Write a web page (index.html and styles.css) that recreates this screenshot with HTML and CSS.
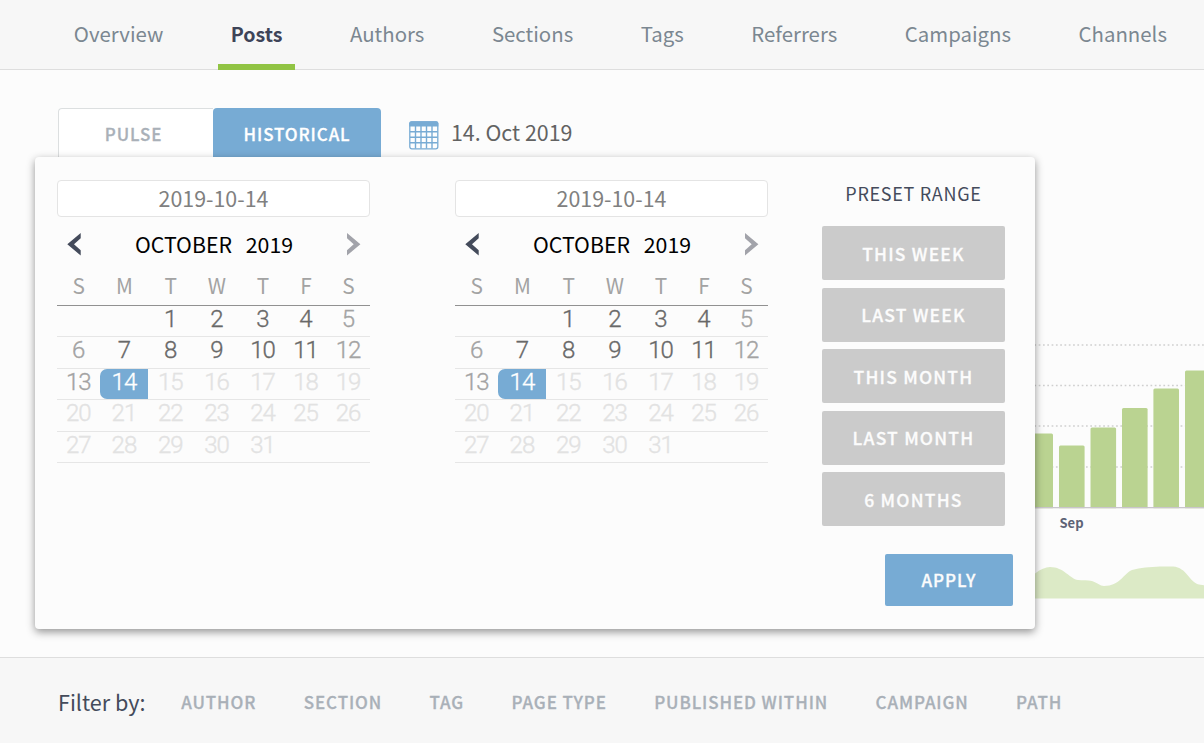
FILE: index.html
```html
<!DOCTYPE html>
<html lang="en">
<head>
<meta charset="utf-8">
<title>Posts</title>
<link rel="stylesheet" href="styles.css">
</head>
<body>
<nav class="tabs">
  <a class="tab">Overview</a>
  <a class="tab active">Posts</a>
  <a class="tab">Authors</a>
  <a class="tab">Sections</a>
  <a class="tab">Tags</a>
  <a class="tab">Referrers</a>
  <a class="tab">Campaigns</a>
  <a class="tab">Channels</a>
</nav>
<main class="content">
  <div class="toolbar">
    <div class="mode pulse">PULSE</div>
    <div class="mode historical">HISTORICAL</div>
    <svg class="cal-icon" width="30" height="29" viewBox="0 0 30 29">
      <rect x="0.8" y="0.8" width="28" height="27" rx="2" fill="#fdfefe" stroke="#77abd4" stroke-width="1.3"/>
      <path d="M.3 5.5V2.300Q.3.300 2.300.3H27.300Q29.300.3 29.300 2.300V5.500Z" fill="#77abd4"/>
      <path d="M6.500 5V27.500M12 5V27.500M17.500 5V27.500M23 5V27.500M1 10.800H28.500M1 16.300H28.500M1 21.800H28.500" stroke="#77abd4" stroke-width="1.400" fill="none"/>
    </svg>
    <span class="date">14. Oct 2019</span>
  </div>
  <svg class="chart" width="204" height="280" viewBox="1000 330 204 280">
    <g stroke="#cfcfcf" stroke-width="1.500" stroke-dasharray="1.700 2.600">
      <path d="M1000 345H1204M1000 385.500H1204M1000 426H1204M1000 467H1204"/>
    </g>
    <g fill="#bad391">
      <rect x="1027" y="433.400" width="26" height="76" rx="1.500"/>
      <rect x="1059" y="445.500" width="25.600" height="64" rx="1.500"/>
      <rect x="1090.500" y="427.500" width="25.600" height="82" rx="1.500"/>
      <rect x="1122" y="408" width="25.600" height="102" rx="1.500"/>
      <rect x="1153.400" y="388.500" width="25.600" height="121" rx="1.500"/>
      <rect x="1185" y="370.500" width="25.600" height="139" rx="1.500"/>
    </g>
    <rect x="1000" y="508.200" width="204" height="4" fill="#fcfcfc"/>
    <rect x="1000" y="507" width="204" height="1.300" fill="#c9c5cb"/>
    <text class="month" x="1059.500" y="528">Sep</text>
    <path fill="#dceac6" d="M1020 598.500V590C1030 576 1041 567 1050 567C1064 567 1070 579 1078 580C1082 580.500 1088 580 1092 581C1097 582.500 1100 586 1104 586C1120 586 1123 574 1132 570C1140 567.500 1150 567 1160 566.500H1173C1187 567.500 1189 582 1199 584.500L1204 585.300V598.500Z"/>
  </svg>
</main>
<footer class="filters">
  <span class="lead">Filter by:</span>
  <span>AUTHOR</span><span>SECTION</span><span>TAG</span><span>PAGE TYPE</span><span>PUBLISHED WITHIN</span><span>CAMPAIGN</span><span>PATH</span>
</footer>

<section class="popover">
  <div class="calendar"></div>
  <div class="calendar"></div>
  <div class="presets">
    <h2>PRESET RANGE</h2>
    <button>THIS WEEK</button>
    <button>LAST WEEK</button>
    <button>THIS MONTH</button>
    <button>LAST MONTH</button>
    <button>6 MONTHS</button>
    <button class="apply">APPLY</button>
  </div>
</section>
<script src="calendar.js"></script>
</body>
</html>
```
FILE: styles.css
```css
* { box-sizing: border-box; }
body {
  margin: 0;
  width: 1204px;
  height: 743px;
  overflow: hidden;
  position: relative;
  display: flex;
  flex-direction: column;
  background: #fcfcfc;
  font-family: "Noto Sans CJK SC", "Noto Sans", sans-serif;
  color: #444b5b;
}
.tabs {
  height: 70px;
  display: flex;
  gap: 41.5px;
  padding-left: 60.800px;
  background: #f7f7f7;
  border-bottom: 1px solid #dedede;
  flex: none;
}
.tab {
  height: 70px;
  padding: 0 13px;
  font-size: 20.400px;
  line-height: 67px;
  color: #7b8791;
  white-space: nowrap;
}
.tab.active {
  color: #3e4458;
  font-weight: 700;
  font-size: 19.600px;
  border-bottom: 6px solid #91c444;
}
.content { height: 587px; flex: none; padding: 38px 0 0 58px; }
.toolbar { display: flex; height: 50px; }
.mode {
  height: 50px;
  line-height: 52px;
  font-size: 17px;
  font-weight: 500;
  letter-spacing: 0.9px;
  text-align: center;
}
.mode, .filters span:not(.lead), .presets button { -webkit-text-stroke: 0.3px currentColor; }
.pulse {
  width: 155px;
  border: 1.5px solid #dcdfe0;
  border-right: 0;
  border-radius: 4px 0 0 0;
  background: #fff;
  color: #a9b0b8;
  line-height: 50px;
  padding-right: 5px;
}
.historical { width: 168px; border-radius: 4px 4px 0 0; background: #77abd4; color: #fff; }
.cal-icon { margin: 13px 12px 0 28px; }
.date { font-size: 21.400px; line-height: 48px; color: #626262; }
.chart { display: block; margin: 172px 0 0 942px; }
.month { font-size: 13px; font-weight: 700; fill: #5d6376; }
.filters {
  height: 86px;
  flex: none;
  display: flex;
  gap: 47.4px;
  padding-left: 58px;
  border-top: 1px solid #dedede;
  background: #f7f7f7;
  line-height: 88px;
  font-size: 17px;
  font-weight: 500;
  letter-spacing: 0.9px;
  color: #a9b0b8;
  white-space: nowrap;
}
.filters .lead {
  font-size: 21.600px;
  font-weight: 400;
  letter-spacing: 0;
  color: #444b5b;
  margin-right: -11.700px;
}
.popover {
  position: absolute;
  left: 34.500px;
  top: 157px;
  width: 1000.500px;
  height: 472px;
  display: flex;
  padding: 23px 0 0 22.500px;
  background: #fcfcfc;
  border-radius: 4px;
  box-shadow: 0 3px 8px rgba(0, 0, 0, 0.42);
}
.calendar { width: 313px; margin-right: 85px; flex: none; }
.date-field {
  height: 37px;
  border: 1px solid #e4e4e4;
  border-radius: 4px;
  background: #fff;
  text-align: center;
  line-height: 33px;
  font-size: 21.400px;
  color: #808080;
}
.month-bar {
  display: flex;
  justify-content: space-between;
  padding: 15px 9px 0 10px;
  height: 55px;
}
.month-bar svg { margin-top: 1px; }
.caption { font-size: 21.300px; line-height: 23px; color: #000; word-spacing: 9px; }
.week {
  display: grid;
  grid-template-columns: 43.400px 48px 44.600px 48px 44px 42px 43px;
  height: 31.600px;
  border-bottom: 1px solid #e6e6e6;
  text-align: center;
}
.week.head {
  height: 33.500px;
  border-bottom: 1.500px solid #919191;
  font-size: 20.800px;
  line-height: 26px;
  color: #a3a3a3;
}
.day {
  font-family: Roboto, sans-serif;
  font-size: 24px;
  font-weight: 350;
  -webkit-text-stroke: 0.35px currentColor;
  letter-spacing: -1px;
  padding-right: 1px;
  line-height: 27px;
  color: #686868;
}
.day.weekend { color: #a3a3a3; }
.day.future { color: #e2e2e2; }
.day.selected {
  background: #77abd4;
  color: #fff;
  border-radius: 7px 0 0 7px;
}
.presets { width: 192px; margin-left: -31px; display: flex; flex-direction: column; }
.presets h2 {
  margin: 0 0 17px;
  width: 183px;
  text-align: center;
  font-size: 18px;
  font-weight: 400;
  line-height: 27px;
  height: 29px;
  letter-spacing: 0.700px;
}
.presets button {
  width: 183px;
  height: 54px;
  flex: none;
  margin: 0 0 7.500px;
  padding: 0;
  border: 0;
  border-radius: 2px;
  background: #cbcbcb;
  color: #fcfcfc;
  font-family: inherit;
  font-size: 17.500px;
  font-weight: 500;
  letter-spacing: 1.200px;
}
.presets .apply { width: 128px; height: 52px; margin: 20px 0 0 63px; background: #77abd4; font-size: 17px; letter-spacing: 1px; }
```
FILE: calendar.js
```js
const today = 14;
const firstColumn = 2;
const daysInMonth = 31;

function weekRow(start) {
  let cells = '';
  for (let col = 0; col < 7; col++) {
    const n = start + col;
    if (n < 1 || n > daysInMonth) {
      cells += '<div></div>';
      continue;
    }
    let kind = '';
    if (n === today) kind = ' selected';
    else if (n > today) kind = ' future';
    else if (col === 0 || col === 6) kind = ' weekend';
    cells += `<div class="day${kind}">${n}</div>`;
  }
  return `<div class="week">${cells}</div>`;
}

document.querySelectorAll('.calendar').forEach((el) => {
  let html = `<div class="date-field">2019-10-14</div>
    <div class="month-bar">
      <svg width="15" height="24" viewBox="0 0 15 24"><path d="M13.700 0V5.200L7 11.200L13.700 17.300V22.500L0.300 11.200Z" fill="#444b5b"/></svg>
      <span class="caption">OCTOBER 2019</span>
      <svg width="15" height="24" viewBox="0 0 15 24"><path d="M1 0V5.200L7.700 11.200L1 17.300V22.500L14.400 11.200Z" fill="#a2a3aa"/></svg>
    </div>
    <div class="week head">${[...'SMTWTFS'].map((d) => `<div>${d}</div>`).join('')}</div>`;
  for (let start = 1 - firstColumn; start <= daysInMonth; start += 7) html += weekRow(start);
  el.innerHTML = html;
});
```
